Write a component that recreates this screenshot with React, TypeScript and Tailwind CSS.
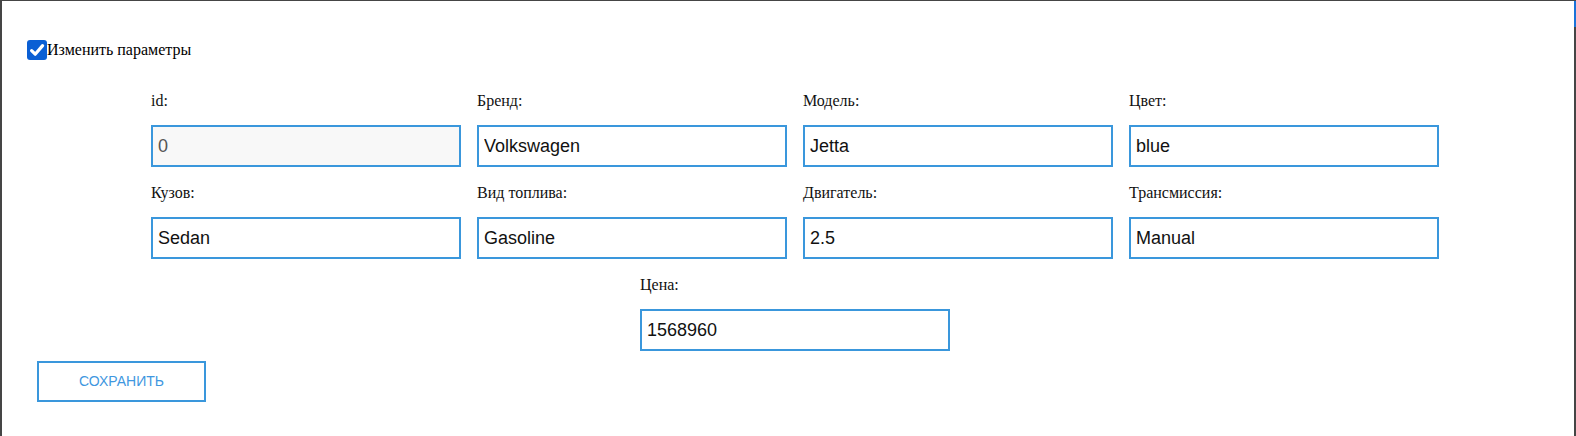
import React from "react";

type Field = { label: string; value: string; disabled?: boolean };

const fields: Field[] = [
  { label: "id:", value: "0", disabled: true },
  { label: "Бренд:", value: "Volkswagen" },
  { label: "Модель:", value: "Jetta" },
  { label: "Цвет:", value: "blue" },
  { label: "Кузов:", value: "Sedan" },
  { label: "Вид топлива:", value: "Gasoline" },
  { label: "Двигатель:", value: "2.5" },
  { label: "Трансмиссия:", value: "Manual" },
];

function FormField({ label, value, disabled }: Field) {
  return (
    <div className="flex flex-col w-[310px]">
      <label className="font-['Liberation_Serif',serif] text-[16px] leading-[18px] text-[#111] mb-[15px]">
        {label}
      </label>
      <input
        defaultValue={value}
        disabled={disabled}
        className={`h-[42px] w-full border-2 border-[#3a97dc] px-[5px] font-['Liberation_Sans',Arial,sans-serif] text-[18px] outline-none ${
          disabled ? "bg-[#f8f8f8] text-[#555]" : "bg-white text-[#111]"
        }`}
      />
    </div>
  );
}

export default function App() {
  return (
    <div className="relative h-[436px] w-[1576px] border-t border-l-2 border-r-2 border-[#454545] bg-white pl-[25px] pt-[39px]">
      {/* right edge marker */}
      <div className="absolute -right-[2px] top-0 h-[26px] w-[2px] bg-[#1a73d9]" />

      {/* Checkbox */}
      <label className="flex items-center h-[20px]">
        <span className="flex items-center justify-center w-[20px] h-[20px] rounded-[3px] bg-[#0b5fd4]">
          <svg viewBox="0 0 16 16" className="w-[16px] h-[16px]">
            <path
              d="M2.6 8.6 L6.2 12.2 L13.6 3.6"
              fill="none"
              stroke="white"
              strokeWidth="3.2"
              strokeLinecap="round"
              strokeLinejoin="round"
            />
          </svg>
        </span>
        <span className="font-['Liberation_Serif',serif] text-[16px] text-black leading-[20px]">
          Изменить параметры
        </span>
      </label>

      {/* Fields */}
      <div className="ml-[124px] mt-[32px] w-[1288px]">
        <div className="grid grid-cols-4 gap-x-[16px] gap-y-[17px]">
          {fields.map((f) => (
            <FormField key={f.label} {...f} />
          ))}
        </div>
        <div className="flex justify-center mt-[17px]">
          <FormField label="Цена:" value="1568960" />
        </div>
      </div>

      {/* Save */}
      <button className="ml-[10px] mt-[10px] h-[41px] w-[169px] border-2 border-[#3a97dc] bg-white font-['Liberation_Sans',Arial,sans-serif] text-[14px] text-[#3f97e0]">
        СОХРАНИТЬ
      </button>
    </div>
  );
}
